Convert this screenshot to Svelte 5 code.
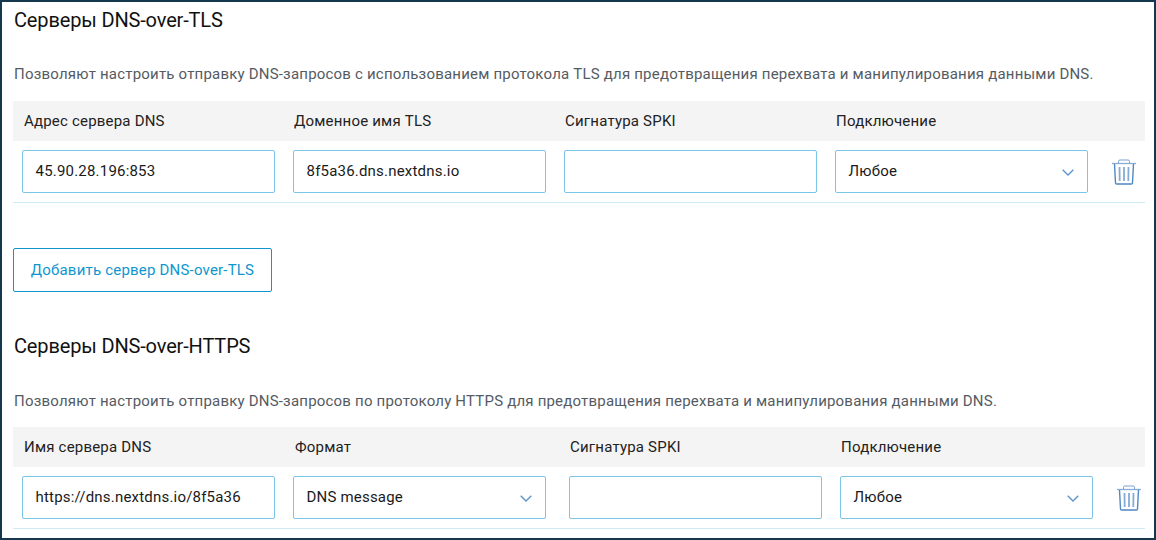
<script>
  const tls = {
    title: 'Серверы DNS-over-TLS',
    desc: 'Позволяют настроить отправку DNS-запросов с использованием протокола TLS для предотвращения перехвата и манипулирования данными DNS.',
    head: ['Адрес сервера DNS', 'Доменное имя TLS', 'Сигнатура SPKI', 'Подключение'],
    cells: [
      { value: '45.90.28.196:853' },
      { value: '8f5a36.dns.nextdns.io' },
      { value: '' },
      { value: 'Любое', select: true }
    ]
  };
  const https = {
    title: 'Серверы DNS-over-HTTPS',
    desc: 'Позволяют настроить отправку DNS-запросов по протоколу HTTPS для предотвращения перехвата и манипулирования данными DNS.',
    head: ['Имя сервера DNS', 'Формат', 'Сигнатура SPKI', 'Подключение'],
    cells: [
      { value: 'https://dns.nextdns.io/8f5a36' },
      { value: 'DNS message', select: true },
      { value: '' },
      { value: 'Любое', select: true }
    ]
  };
</script>

{#snippet table(s, cls)}
  <h2>{s.title}</h2>
  <p class="desc">{s.desc}</p>
  <div class="table {cls}">
    <div class="row head">
      {#each s.head as h}<div class="th">{h}</div>{/each}
    </div>
    <div class="row body">
      {#each s.cells as c}
        <div class="field" class:select={c.select}>
          <span>{c.value}</span>
          {#if c.select}
            <svg class="chev" width="12" height="7" viewBox="0 0 12 7" fill="none"><path d="M.7.7L6 6l5.300-5.300" stroke="#5b93cc" stroke-width="1.300"/></svg>
          {/if}
        </div>
      {/each}
      <svg class="trash" width="24" height="26" viewBox="0 0 24 26" fill="none" stroke="#4f88c4" stroke-width="1">
        <path d="M0 4.500h24" stroke="#86abd6" stroke-width="1.300"/>
        <path d="M6.500 4V2.200Q6.500 1 8 1h8q1.500 0 1.500 1.200V4" stroke="#7ba4d2"/>
        <path d="M2.500 5l1 19q.1 1 1 1h15q.9 0 1-1l1-19" stroke-width="1.400"/>
        <path d="M7.500 8l.2 14M12 8v14M16.500 8l-.2 14" stroke="#86abd6" stroke-width="1.800"/>
      </svg>
    </div>
  </div>
{/snippet}

<div class="frame">
  {@render table(tls, 'a')}
  <button class="add">Добавить сервер DNS-over-TLS</button>
  {@render table(https, 'b')}
</div>

<style>
  :global(body) { margin: 0; }
  .frame {
    box-sizing: border-box;
    width: 1156px;
    height: 540px;
    overflow: hidden;
    border: 2px solid #16384f;
    padding: 0 9px 0 11px;
    background: #fff;
    font-family: Roboto, sans-serif;
    color: #1c1c1c;
    letter-spacing: 0.2px;
  }
  h2 {
    margin: 0;
    font-size: 20px;
    font-weight: 400;
    line-height: 28px;
    color: #111;
    height: 28px;
    padding: 4px 0 0 1px;
    letter-spacing: -0.15px;
  }
  .desc {
    margin: 0;
    padding: 29px 0 0 1px;
    height: 38px;
    font-size: 15px;
    line-height: 22px;
    color: #555b63;
  }
  .row { display: flex; }
  .head {
    background: #f4f4f4;
    height: 40px;
    align-items: center;
    padding-left: 9px;
    font-size: 15px;
    color: #222;
  }
  .th { width: 271px; padding-left: 2px; box-sizing: border-box; }
  .a .th:first-child { width: 270px; }
  .b .th:nth-child(2) { width: 275px; }
  .body {
    height: 62px;
    box-sizing: border-box;
    border-bottom: 1px solid #cdeaf5;
    padding: 9px 0 0 9px;
    align-items: flex-start;
    gap: 18px;
  }
  .b .field:nth-child(3) { margin-left: 5px; }
  .field {
    box-sizing: border-box;
    width: 253px;
    height: 43px;
    border: 1px solid #7cc4e8;
    border-radius: 2px;
    padding: 0 13px 0 12.5px;
    display: flex;
    align-items: center;
    justify-content: space-between;
    font-size: 15px;
    color: #1a1a1a;
  }
  .field span { position: relative; top: -1px; }
  .chev { margin-top: 2px; }
  .trash { margin: 9px 0 0 5.5px; }
  .add {
    display: block;
    box-sizing: border-box;
    margin: 45px 0 0 0;
    width: 259px;
    height: 44px;
    border: 1px solid #0f96cf;
    border-radius: 2px;
    background: #fff;
    color: #0f96cf;
    font: 15px Roboto, sans-serif;
    letter-spacing: 0.2px;
    padding: 0;
  }
  .add + h2 { margin-top: 36px; }
  .add + h2 + .desc { padding-top: 30px; height: 37px; }
</style>
